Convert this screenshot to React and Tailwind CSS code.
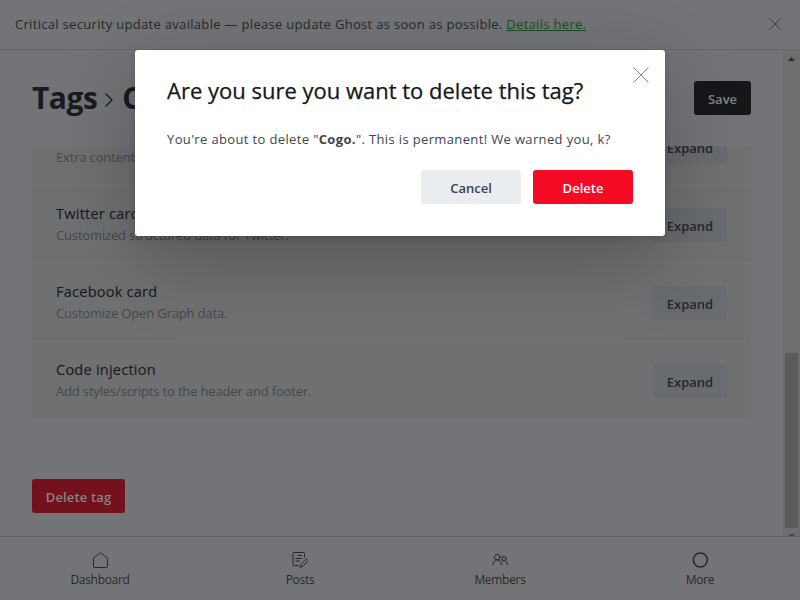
const sections = [
  { title: 'Meta data', text: 'Extra content for search engines.' },
  { title: 'Twitter card', text: 'Customized structured data for Twitter.' },
  { title: 'Facebook card', text: 'Customize Open Graph data.' },
  { title: 'Code injection', text: 'Add styles/scripts to the header and footer.' },
];

function Cross({ className }) {
  return (
    <svg viewBox="0 0 16 16" className={className} fill="none" stroke="currentColor">
      <path d="M.5.5l15 15M15.5.5l-15 15" />
    </svg>
  );
}

function HomeIcon() {
  return (
    <svg width="16" height="16" viewBox="0 0 16 16" fill="none" stroke="currentColor" strokeLinejoin="round">
      <path d="M1.500 6.200L8.500.6l7 5.600v8.300a1 1 0 0 1-1 1h-12a1 1 0 0 1-1-1z" />
    </svg>
  );
}

function PostsIcon() {
  return (
    <svg width="16" height="16" viewBox="0 0 16 16" fill="none" stroke="currentColor" strokeLinejoin="round">
      <path d="M12.500 5.500V1.500a1 1 0 0 0-1-1h-9.500a1 1 0 0 0-1 1v11a1 1 0 0 0 1 1H6.500M5.500 3.500H10M3.500 6.500h6.500M3.500 9h4.500" />
      <path d="M8 15.400l.7-2.800 4.800-4.800a1.200 1.200 0 0 1 1.800 0 1.200 1.200 0 0 1 0 1.800l-4.600 4.800z" />
    </svg>
  );
}

function MembersIcon() {
  return (
    <svg width="16" height="16" viewBox="0 0 16 16" fill="none" stroke="currentColor" strokeLinecap="round">
      <circle cx="5.200" cy="5.200" r="2.800" />
      <path d="M.7 13c.2-3 1.800-5 4.500-5s4.100 2 4.400 5" />
      <circle cx="12" cy="6.400" r="2.200" />
      <path d="M9.700 9.800c.6-.8 1.300-1.200 2.300-1.200 2.200 0 3.300 1.600 3.500 4" />
    </svg>
  );
}

function MoreIcon() {
  return (
    <svg width="16" height="16" viewBox="0 0 16 16" fill="none" stroke="currentColor" strokeWidth="1.500">
      <circle cx="8.300" cy="8" r="7" />
    </svg>
  );
}

function NavItem({ icon, label }) {
  return (
    <div className="flex flex-col items-center pt-[15px]">
      {icon}
      <span className="mt-[3px] text-[12px] leading-[18px] tracking-[-0.300px]">{label}</span>
    </div>
  );
}

function Section({ title, text }) {
  return (
    <div className="flex h-[78px] shrink-0 items-start justify-between border-t border-[#747577] px-6">
      <div className="pt-[17px]">
        <h4 className="text-[14.500px] leading-[22px] tracking-[0.250px] text-[#191b1f] [-webkit-text-stroke:0.120px]">{title}</h4>
        <p className="whitespace-nowrap text-[13px] leading-[20px] tracking-[-0.160px] text-[#43484f]">{text}</p>
      </div>
      <button className="mt-[22px] h-[34px] w-[74px] rounded-[3px] bg-[#686b6f] pt-[3px] text-[13px] font-semibold text-[#25272b]">
        Expand
      </button>
    </div>
  );
}

export default function App() {
  return (
    <div className="relative flex h-[600px] w-[800px] flex-col overflow-hidden bg-[#737477] font-['Open_Sans','Noto_Sans',sans-serif]">
      <div className="flex h-[50px] shrink-0 items-center justify-between border-b border-[#66676a] pl-[15px] pr-[19px] text-[#26282c]">
        <p className="whitespace-nowrap text-[13px] tracking-[0.310px]">
          Critical security update available — please update Ghost as soon as possible.{' '}
          <span className="text-[#174f20] underline">Details here.</span>
        </p>
        <Cross className="-mt-px h-3 w-3" />
      </div>

      <div className="flex min-h-0 flex-1">
        <main className="flex w-[783px] flex-col pl-8 pr-8">
          <header className="flex h-24 shrink-0 items-center justify-between">
            <h2 className="-mt-px flex items-center whitespace-nowrap text-[30px] font-bold tracking-[-0.500px] text-[#191b1f]">
              Tags
              <svg width="10" height="16" viewBox="0 0 10 16" fill="none" stroke="currentColor" strokeWidth="1.300" className="ml-[7px] mr-[8px] mt-1">
                <path d="M1.500 1.500L8 8l-6.500 6.500" />
              </svg>
              Cogo.
            </h2>
            <button className="h-[34px] w-[57px] rounded-[3px] bg-[#15171b] pt-[3px] text-[13px] font-semibold text-[#838487]">
              Save
            </button>
          </header>
          <div className="flex h-[273px] shrink-0 flex-col justify-end overflow-hidden rounded-b-[3px] bg-[#6f7072]">
            {sections.map((s) => (
              <Section key={s.title} title={s.title} text={s.text} />
            ))}
          </div>
          <button className="mt-[60px] h-[34px] w-[93px] shrink-0 rounded-[3px] bg-[#73111d] pt-[3px] text-[13px] font-semibold tracking-[0.150px] text-[#8a8285]">
            Delete tag
          </button>
        </main>
        <div className="flex w-[17px] flex-col items-center overflow-hidden bg-[#6d6e70] pt-[7px]">
          <svg width="7" height="4" viewBox="0 0 7 4" fill="#2b2c2e" className="shrink-0">
            <path d="M3.500 0L7 4H0z" />
          </svg>
          <div className="mt-[292px] h-[175px] w-[13px] shrink-0 bg-[#5a5b5d]" />
          <svg width="7" height="4" viewBox="0 0 7 4" fill="#454648" className="mt-[6px] shrink-0">
            <path d="M0 0h7L3.500 4z" />
          </svg>
        </div>
      </div>

      <nav className="grid h-16 shrink-0 grid-cols-4 border-t border-[#616265] text-[#26282c]">
        <NavItem icon={<HomeIcon />} label="Dashboard" />
        <NavItem icon={<PostsIcon />} label="Posts" />
        <NavItem icon={<MembersIcon />} label="Members" />
        <NavItem icon={<MoreIcon />} label="More" />
      </nav>

      <div className="absolute left-[135px] top-[50px] h-[186px] w-[530px] rounded-[3px] bg-white px-8 shadow-[0_3px_7px_rgba(0,0,0,0.12),0_22px_80px_rgba(0,0,0,0.24)]">
        <div className="flex justify-between">
          <h1 className="mt-[23px] whitespace-nowrap text-[22px] leading-[34px] tracking-normal text-[#15171a] [-webkit-text-stroke:0.250px]">
            Are you sure you want to delete this tag?
          </h1>
          <Cross className="-mr-4 mt-[17px] h-4 w-4 text-[#85888c]" />
        </div>
        <p className="mt-[21px] whitespace-nowrap text-[13px] leading-[22px] tracking-[0.360px] text-[#3f444c]">
          You're about to delete "<strong className="font-bold">Cogo.</strong>". This is permanent! We warned you, k?
        </p>
        <div className="mt-5 flex justify-end gap-3">
          <button className="h-[34px] w-[100px] rounded-[3px] bg-[#e9edf0] pt-[3px] text-[13px] font-semibold text-[#3d4249]">Cancel</button>
          <button className="h-[34px] w-[100px] rounded-[3px] bg-[#f50b23] pt-[3px] text-[13px] font-semibold text-white">Delete</button>
        </div>
      </div>
    </div>
  );
}
